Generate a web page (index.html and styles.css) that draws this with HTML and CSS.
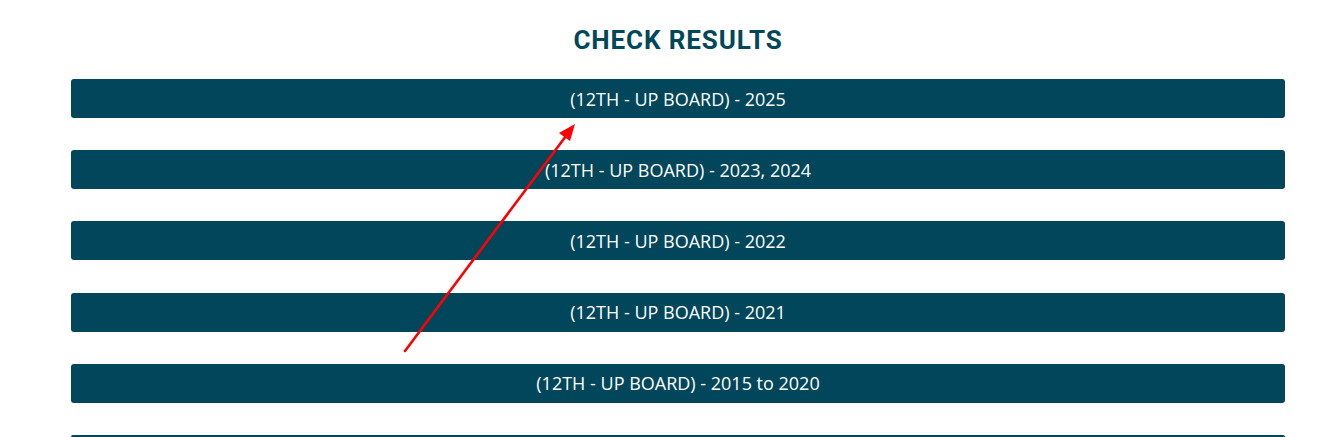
FILE: index.html
```html
<!DOCTYPE html>
<html>
<head>
<meta charset="utf-8">
<link rel="stylesheet" href="styles.css">
</head>
<body>
<main class="page">
  <h2 class="title">CHECK RESULTS</h2>
  <div class="list">
    <a class="result">(12TH - UP BOARD) - 2025</a>
    <a class="result">(12TH - UP BOARD) - 2023, 2024</a>
    <a class="result">(12TH - UP BOARD) - 2022</a>
    <a class="result">(12TH - UP BOARD) - 2021</a>
    <a class="result">(12TH - UP BOARD) - 2015 to 2020</a>
    <span class="result result-peek"></span>
  </div>
  <svg class="arrow" width="1332" height="437" viewBox="0 0 1332 437">
    <line x1="405" y1="351" x2="566" y2="136" stroke="#ff0000" stroke-width="2.6" stroke-linecap="round"/>
    <polygon points="575,124 559,133 570,141" fill="#ff0000"/>
  </svg>
</main>
</body>
</html>
```
FILE: styles.css
```css
html, body {
  margin: 0;
  padding: 0;
  background: #ffffff;
  overflow: hidden;
  height: 437px;
}
.page {
  position: relative;
  height: 437px;
  overflow: hidden;
  padding: 0 47px 0 71px;
}
.title {
  margin: 0;
  padding-top: 25px;
  height: 79px;
  box-sizing: border-box;
  text-align: center;
  font-family: Roboto, "Liberation Sans", sans-serif;
  font-weight: 700;
  font-size: 26px;
  letter-spacing: 0.9px;
  line-height: 30px;
  color: #01475a;
}
.list {
  display: flex;
  flex-direction: column;
  gap: 32.2px;
}
.result {
  display: flex;
  align-items: center;
  justify-content: center;
  height: 39px;
  border-radius: 3px;
  background: #01465a;
  color: #ffffff;
  font-family: "Open Sans", "Liberation Sans", sans-serif;
  font-size: 18px;
  text-decoration: none;
}
.result-peek {
  height: 2px;
  border-radius: 3px 3px 0 0;
}
.arrow {
  position: absolute;
  left: 0;
  top: 0;
  pointer-events: none;
}
```
